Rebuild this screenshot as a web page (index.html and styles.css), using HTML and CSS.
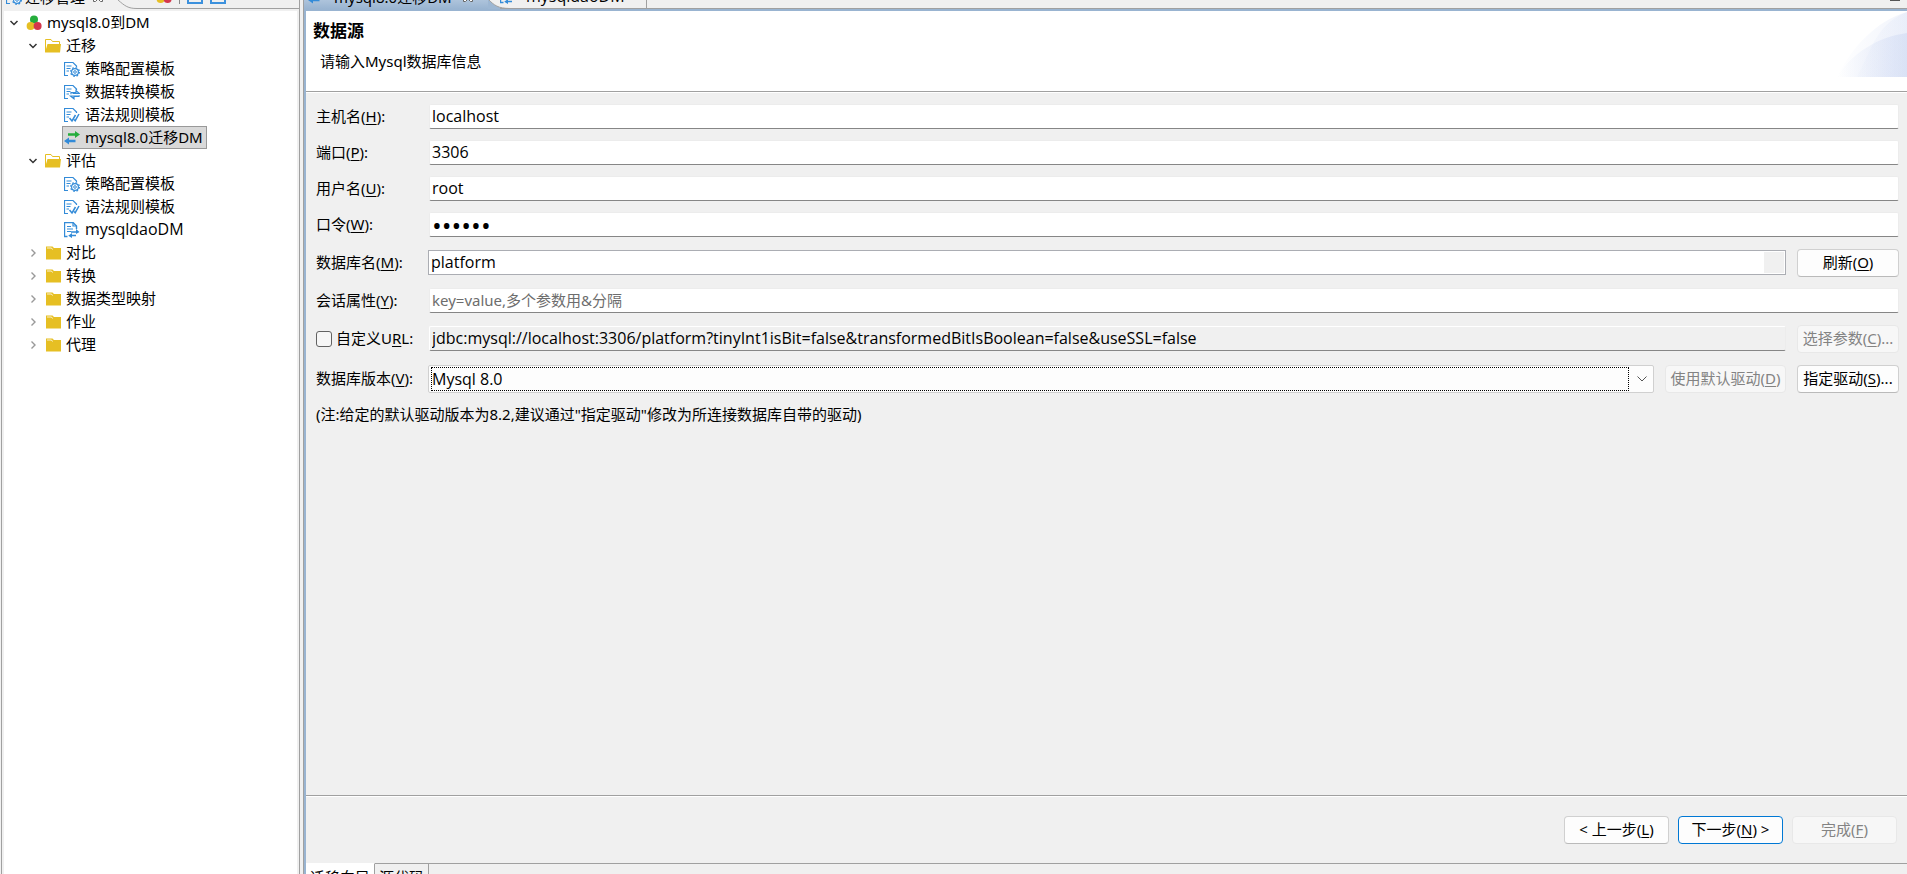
FILE: index.html
```
<!DOCTYPE html>
<html lang="zh-CN">
<head>
<meta charset="utf-8">
<title>迁移管理</title>
<link rel="stylesheet" href="styles.css">
</head>
<body>
<svg class="defs" width="0" height="0" aria-hidden="true">
  <symbol id="i-down" viewBox="0 0 10 16"><path d="M1.500 6l3.500 3.500L8.500 6" fill="none" stroke="#333" stroke-width="1.500"/></symbol>
  <symbol id="i-right" viewBox="0 0 10 16"><path d="M3.500 4.500L7 8l-3.500 3.500" fill="none" stroke="#999" stroke-width="1.400"/></symbol>
  <symbol id="i-balls" viewBox="0 0 16 16"><circle cx="8" cy="4.500" r="4" fill="#25ad3c"/><circle cx="4.600" cy="11" r="4" fill="#e6bf23"/><circle cx="11.600" cy="11" r="4" fill="#d4374c"/></symbol>
  <symbol id="i-open" viewBox="0 0 16 16"><path d="M.5 14V1.500h5.500l1.500 2h7V6" fill="none" stroke="#e6bf23"/><path d="M0 14.500L2.500 6H16l-1 8.500z" fill="#e6bf23"/></symbol>
  <symbol id="i-folder" viewBox="0 0 16 16"><path d="M1 1.500h6.500L9 3h7v11.500H1z" fill="#e6bf23"/><path d="M2 3h4.500l1 1.500" fill="none" stroke="#fff" stroke-width=".8"/></symbol>
  <symbol id="i-page" viewBox="0 0 16 16"><path d="M4 14.500H.5V1.500h8.500L12.500 5v1" fill="none" stroke="#338bd8" stroke-width="1.200"/><path d="M2.500 5h5M2.500 7.500h4M2.500 10h2.500" stroke="#338bd8" stroke-width="1.200"/></symbol>
  <symbol id="i-gear" viewBox="0 0 16 16"><use href="#i-page"/><circle cx="11" cy="11" r="3.400" fill="#fff" stroke="#338bd8" stroke-width="1.200"/><circle cx="11" cy="11" r="1.300" fill="none" stroke="#338bd8"/><circle cx="11" cy="11" r="4.400" fill="none" stroke="#338bd8" stroke-width="1.200" stroke-dasharray="1.700 1.756"/></symbol>
  <symbol id="i-convert" viewBox="0 0 16 16"><use href="#i-page"/><path d="M7 10.300V8.500h5V6.500L15.300 9.500H8.500M15 11v1.500h-5v2.300L6.500 12H14" fill="none" stroke="#338bd8" stroke-width="1.200"/></symbol>
  <symbol id="i-check" viewBox="0 0 16 16"><use href="#i-page"/><path d="M5.500 11l2.500 3 3.500-6M10 12.500l1.200 1.200L15 7" fill="none" stroke="#338bd8" stroke-width="1.500"/></symbol>
  <symbol id="i-move" viewBox="0 0 16 16"><path d="M4 3.200h7V1l5 3.500L11 8V5.800H4z" fill="#25ad3c"/><path d="M11.500 9.700H5V7.500L0 11l5 3.500v-2.200h6.500z" fill="#338bd8"/></symbol>
  <symbol id="i-task" viewBox="0 0 16 16"><path d="M3.500 14.500h-3V.5h8.500L12.500 4v3" fill="none" stroke="#338bd8" stroke-width="1.400"/><path d="M9 .5V4h3.500M3 4.500h4M3 7h6M3 9.500h4" fill="none" stroke="#338bd8" stroke-width="1.200"/><path d="M7 9.200h5V7l3.500 3-3.500 2V10.800H7zM12 12.800H8V11l-3.800 2.800L8 16v-1.800h4z" fill="#338bd8"/></symbol>
  <symbol id="i-close" viewBox="0 0 12 12"><path d="M1.500 1.500h2L6 4l2.500-2.500h2v2L8 6l2.500 2.500v2h-2L6 8l-2.500 2.500h-2v-2L4 6 1.500 3.500z" fill="#fff" stroke="#666"/></symbol>
</svg>

<main class="workbench">
  <aside class="view">
    <header class="view-bar">
      <div class="view-tab">
        <svg class="icon"><use href="#i-gear"/></svg>
        <span class="view-name">迁移管理</span>
        <svg class="close"><use href="#i-close"/></svg>
      </div>
      <svg class="curve" viewBox="0 0 32 9"><path d="M0 0C7 6 10 8.500 19 8.500H32" fill="none" stroke="#a0a0a0"/></svg>
      <div class="tools">
        <svg class="icon"><use href="#i-balls"/></svg>
        <i class="rule"></i>
        <i class="box"></i>
        <i class="box"></i>
        <i class="minimize"></i>
      </div>
    </header>
    <ul class="tree">
      <li class="node"><svg class="twist"><use href="#i-down"/></svg><svg class="icon"><use href="#i-balls"/></svg><span>mysql8.0到DM</span></li>
      <li class="node sub"><svg class="twist"><use href="#i-down"/></svg><svg class="icon"><use href="#i-open"/></svg><span>迁移</span></li>
      <li class="node leaf"><svg class="icon"><use href="#i-gear"/></svg><span>策略配置模板</span></li>
      <li class="node leaf"><svg class="icon"><use href="#i-convert"/></svg><span>数据转换模板</span></li>
      <li class="node leaf"><svg class="icon"><use href="#i-check"/></svg><span>语法规则模板</span></li>
      <li class="node leaf selected"><svg class="icon"><use href="#i-move"/></svg><span>mysql8.0迁移DM</span></li>
      <li class="node sub"><svg class="twist"><use href="#i-down"/></svg><svg class="icon"><use href="#i-open"/></svg><span>评估</span></li>
      <li class="node leaf"><svg class="icon"><use href="#i-gear"/></svg><span>策略配置模板</span></li>
      <li class="node leaf"><svg class="icon"><use href="#i-check"/></svg><span>语法规则模板</span></li>
      <li class="node leaf"><svg class="icon"><use href="#i-task"/></svg><span class="latin">mysqldaoDM</span></li>
      <li class="node sub"><svg class="twist"><use href="#i-right"/></svg><svg class="icon"><use href="#i-folder"/></svg><span>对比</span></li>
      <li class="node sub"><svg class="twist"><use href="#i-right"/></svg><svg class="icon"><use href="#i-folder"/></svg><span>转换</span></li>
      <li class="node sub"><svg class="twist"><use href="#i-right"/></svg><svg class="icon"><use href="#i-folder"/></svg><span>数据类型映射</span></li>
      <li class="node sub"><svg class="twist"><use href="#i-right"/></svg><svg class="icon"><use href="#i-folder"/></svg><span>作业</span></li>
      <li class="node sub"><svg class="twist"><use href="#i-right"/></svg><svg class="icon"><use href="#i-folder"/></svg><span>代理</span></li>
    </ul>
  </aside>

  <section class="editor">
    <header class="tabs">
      <div class="tab active">
        <svg class="icon"><use href="#i-move"/></svg>
        <span>mysql8.0迁移DM</span>
        <svg class="close"><use href="#i-close"/></svg>
      </div>
      <svg class="tab-curve" viewBox="0 0 22 9"><path d="M0 0h1C6 5 10 8.500 22 8.500V9H0z" fill="#9db7d3"/><path d="M1 0C6 5 10 8.500 22 8.500" fill="none" stroke="#a0a0a0"/></svg>
      <div class="tab other">
        <svg class="icon"><use href="#i-task"/></svg>
        <span class="latin">mysqldaoDM</span>
      </div>
      <div class="tab-rest"><i class="minimize"></i></div>
    </header>

    <div class="banner">
      <div class="banner-text">
        <h1>数据源</h1>
        <p>请输入Mysql数据库信息</p>
      </div>
      <svg class="wave" viewBox="0 0 70 65" aria-hidden="true">
        <defs><linearGradient id="fade" gradientUnits="userSpaceOnUse" x1="0" x2="70" y1="0" y2="0"><stop offset="0" stop-color="#c3d0f0" stop-opacity="0"/><stop offset="1" stop-color="#c3d0f0" stop-opacity=".4"/></linearGradient></defs>
        <path d="M0 65C14 36 40 8 70 0V65z" fill="url(#fade)" opacity=".6"/>
        <path d="M34 36C42 18 54 6 70 0V65H20z" fill="url(#fade)" opacity=".4"/>
        <path d="M0 65C14 42 40 25 70 21V65z" fill="url(#fade)"/>
      </svg>
    </div>

    <form class="form">
      <div class="row"><label class="name" for="host">主机名(<u>H</u>):</label><input class="text" id="host" type="text" value="localhost"></div>
      <div class="row"><label class="name" for="port">端口(<u>P</u>):</label><input class="text" id="port" type="text" value="3306"></div>
      <div class="row"><label class="name" for="user">用户名(<u>U</u>):</label><input class="text" id="user" type="text" value="root"></div>
      <div class="row"><label class="name" for="pass">口令(<u>W</u>):</label><input class="text password" id="pass" type="password" value="123456"></div>
      <div class="row tall"><label class="name" for="db">数据库名(<u>M</u>):</label>
        <div class="picker"><input id="db" type="text" value="platform"><button class="pick" type="button" aria-label="选择数据库"></button></div>
        <button class="btn side" type="button">刷新(<u>O</u>)</button></div>
      <div class="row"><label class="name" for="props">会话属性(<u>Y</u>):</label><input class="text" id="props" type="text" placeholder="key=value,多个参数用&amp;分隔"></div>
      <div class="row tall"><div class="name check"><input id="custom" type="checkbox"><label for="custom" id="custom-name">自定义U<u>R</u>L:</label></div>
        <input class="text readonly" type="text" readonly aria-labelledby="custom-name" value="jdbc:mysql://localhost:3306/platform?tinyInt1isBit=false&amp;transformedBitIsBoolean=false&amp;useSSL=false">
        <button class="btn side" type="button" disabled>选择参数(<u>C</u>)...</button></div>
      <div class="row tall"><label class="name" for="version">数据库版本(<u>V</u>):</label>
        <div class="combo"><select id="version"><option>Mysql 8.0</option></select><svg class="arrow" viewBox="0 0 10 6"><path d="M.5.5L5 5 9.500.5" fill="none" stroke="#555"/></svg></div>
        <button class="btn driver" type="button" disabled>使用默认驱动(<u>D</u>)</button>
        <button class="btn side" type="button">指定驱动(<u>S</u>)...</button></div>
      <p class="note">(注:给定的默认驱动版本为8.2,建议通过"指定驱动"修改为所连接数据库自带的驱动)</p>
    </form>

    <footer class="actions">
      <button class="btn step" type="button">&lt; 上一步(<u>L</u>)</button>
      <button class="btn step primary" type="button">下一步(<u>N</u>) &gt;</button>
      <button class="btn step" type="button" disabled>完成(<u>F</u>)</button>
    </footer>

    <nav class="pages">
      <button class="page current" type="button">迁移向导</button>
      <button class="page" type="button">源代码</button>
      <i class="pages-rest"></i>
    </nav>
  </section>
</main>
</body>
</html>
```
FILE: styles.css
```
* { box-sizing: border-box; }

body {
  margin: 0;
  background: #f0f0f0;
  color: #000;
  font: 15px/20px "Noto Sans", "Noto Sans CJK SC", sans-serif;
}

.defs { display: block; }
button, input, select { margin: 0; color: inherit; font: inherit; }
.latin, input, select { font: 16px/20px "Open Sans", "Noto Sans CJK SC", sans-serif; }
h1, p, ul { margin: 0; padding: 0; }
u { text-underline-offset: 2px; }
svg { flex: none; }

.workbench { display: flex; height: 100vh; overflow: hidden; }
.icon { width: 16px; height: 16px; }
.close { width: 12px; height: 12px; }
.minimize { width: 10px; height: 8px; border-top: 1px solid #555; }

/* Project tree */
.view {
  flex: none;
  display: flex;
  flex-direction: column;
  width: 299px;
  margin: 0 3px 0 1px;
  border: solid #a0a0a0;
  border-width: 0 1px;
}
.view-bar { display: flex; height: 9px; overflow: hidden; }
.view-tab {
  flex: none;
  display: flex;
  align-items: center;
  align-self: flex-end;
  gap: 3px;
  width: 116px;
  height: 24px;
  padding-left: 4px;
  border-bottom: 1px solid #f0f0f0;
}
.view-name { flex: 1; white-space: nowrap; }
.view-tab .close { margin-right: 14px; }
.curve { width: 32px; height: 9px; }
.tools {
  flex: 1;
  display: flex;
  align-items: flex-end;
  align-self: flex-end;
  gap: 7px;
  height: 24px;
  padding: 0 10px 4px 6px;
  border-bottom: 1px solid #a0a0a0;
}
.rule { width: 1px; height: 16px; background: #888; }
.box { width: 16px; height: 14px; border: 2px solid #3c91dd; }
.tools .minimize { margin-left: auto; }
.tree {
  flex: 1;
  margin: 2px 2px 0;
  background: #fff;
  list-style: none;
}
.node {
  display: flex;
  align-items: center;
  width: fit-content;
  height: 23px;
  margin-left: 5px;
  white-space: nowrap;
}
.node.sub { margin-left: 24px; }
.node.leaf { margin-left: 58px; padding: 0 3px 0 1px; border: 1px solid transparent; }
.node.selected { background: #d9d9d9; border-color: #999; }
.twist { width: 10px; height: 16px; margin-right: 7px; }
.node span { margin-left: 5px; padding-bottom: 2px; }

/* Editor */
.editor {
  flex: 1;
  display: flex;
  flex-direction: column;
  min-width: 0;
  border-left: 1px solid #a0a0a0;
  box-shadow: inset 2px 0 #99b4d1;
  padding-left: 2px;
}
.tabs {
  flex: none;
  display: flex;
  height: 11px;
  margin-left: -2px;
  border-bottom: 2px solid #99b4d1;
  overflow: hidden;
}
.tab {
  flex: none;
  display: flex;
  align-items: center;
  align-self: flex-end;
  height: 25px;
  white-space: nowrap;
}
.tab.active {
  gap: 10px;
  width: 184px;
  padding-left: 4px;
  background: linear-gradient(#d3e0ee, #99b4d1);
}
.tab-curve { width: 22px; height: 9px; }
.tab.other {
  gap: 10px;
  width: 147px;
  margin-left: -10px;
  border: solid #a0a0a0;
  border-width: 0 1px 1px 0;
}
.tab-rest {
  flex: 1;
  display: flex;
  justify-content: flex-end;
  padding-right: 7px;
  border-bottom: 1px solid #a0a0a0;
}

.banner {
  flex: none;
  display: flex;
  justify-content: space-between;
  height: 82px;
  background: #fff;
  border-bottom: 1px solid #fff;
  box-shadow: inset 0 -1px #a0a0a0;
}
.banner-text { padding: 8px 7px; }
.banner h1 { font-size: 17px; line-height: 24px; }
.banner p { margin-top: 8px; padding-left: 7px; }
.wave { width: 70px; height: 65px; margin-top: 1px; }

.form {
  flex: 1;
  display: flex;
  flex-direction: column;
  gap: 11px;
  padding: 11px 8px 0 10px;
}
.row { display: flex; align-items: center; height: 25px; }
.row.tall { height: 29px; }
.name { flex: none; width: 113px; padding-bottom: 2px; white-space: nowrap; }
.text {
  flex: 1;
  min-width: 0;
  height: 25px;
  padding: 0 2px 1px;
  border: 1px solid #ececec;
  border-bottom-color: #868686;
  border-radius: 2px;
  background: #fff;
  outline: none;
}
.password { padding-bottom: 0; font-size: 26px; }
.text::placeholder { color: #6d6d6d; opacity: 1; }
#props { font-family: "Noto Sans", "Noto Sans CJK SC", sans-serif; font-size: 15px; }
.readonly { background: #f0f0f0; border-top-color: #fff; border-left-color: #fff; }
.check { display: flex; align-items: center; gap: 4px; padding-bottom: 0; }
.check label { padding-bottom: 2px; }
.check input {
  appearance: none;
  width: 16px;
  height: 16px;
  border: 1px solid #626262;
  border-radius: 3px;
  background: #f6f6f6;
}
.picker {
  flex: 1;
  display: flex;
  height: 25px;
  margin-left: -1px;
  padding: 1px;
  border: 1px solid #abadb3;
  background: #fff;
}
.picker input { flex: 1; min-width: 0; padding: 0 1px 1px; border: 0; background: none; outline: none; }
.pick { width: 20px; padding: 0; border: 0; background: #f0f0f0; }
.combo {
  flex: 1;
  display: flex;
  align-items: center;
  height: 28px;
  margin-left: -1px;
  padding: 2px;
  border: 1px solid #d0d0d0;
  border-radius: 2px;
  background: #fdfdfd;
}
.combo select {
  flex: 1;
  height: 24px;
  padding: 0;
  border: 1px dotted #000;
  border-radius: 0;
  background: none;
  appearance: none;
  outline: none;
}
.arrow { width: 10px; height: 6px; margin: 0 4px 0 8px; }

.btn {
  flex: none;
  height: 28px;
  padding: 0 0 2px;
  border: 1px solid #d0d0d0;
  border-bottom-color: #bababa;
  border-radius: 4px;
  background: #fdfdfd;
  white-space: nowrap;
}
.btn:disabled { color: #838383; border-color: #e8e8e8; background: #f7f7f7; }
.side { width: 102px; margin-left: 11px; }
.driver { width: 121px; margin-left: 11px; }
.step { width: 105px; }
.btn.primary { border-color: #0078d4; }

.actions {
  flex: none;
  display: flex;
  justify-content: flex-end;
  gap: 9px;
  padding: 20px 10px;
  border-top: 1px solid #a0a0a0;
  box-shadow: inset 0 1px #fff;
  height: 68px;
}
.pages { flex: none; display: flex; height: 11px; overflow: hidden; }
.page {
  flex: none;
  height: 26px;
  padding: 0 4px;
  border: solid #a0a0a0;
  border-width: 1px 1px 0 0;
  background: #f0f0f0;
  white-space: nowrap;
}
.page.current { background: #fff; border-top-color: #fff; }
.pages-rest { flex: 1; border-top: 1px solid #a0a0a0; }
```
